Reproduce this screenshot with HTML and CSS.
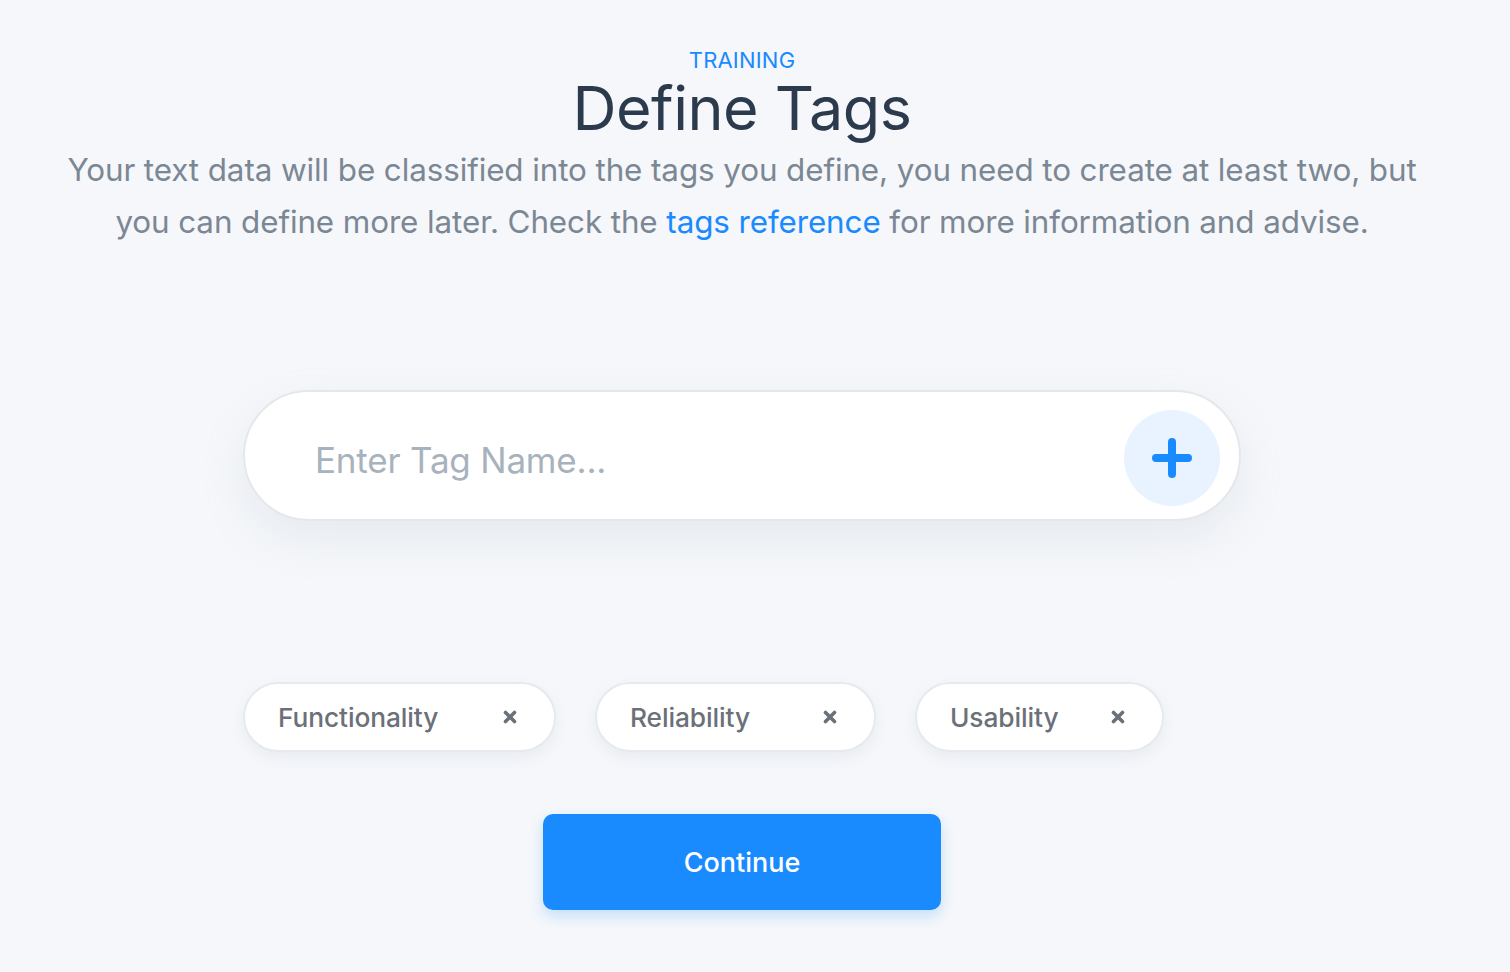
FILE: index.html
```html
<!DOCTYPE html>
<html lang="en">
<head>
<meta charset="utf-8">
<title>Define Tags</title>
<link rel="stylesheet" href="styles.css">
</head>
<body>
<main class="page">
  <header class="intro">
    <div class="eyebrow">TRAINING</div>
    <h1 class="title">Define Tags</h1>
    <p class="lead">Your text data will be classified into the tags you define, you need to create at least two, but you can define more later. Check the <a class="link" href="#">tags reference</a> for more information and advise.</p>
  </header>

  <form class="tag-form" onsubmit="return false">
    <input class="tag-input" type="text" placeholder="Enter Tag Name...">
    <button class="add-btn" type="button" aria-label="Add tag">
      <svg width="42" height="42" viewBox="0 0 42 42"><path d="M21 5V37M5 21H37" stroke="#1a8aff" stroke-width="8" stroke-linecap="round" fill="none"/></svg>
    </button>
  </form>

  <ul class="chips">
    <li class="chip chip-func"><span class="chip-label">Functionality</span><svg class="chip-x" width="14" height="14" viewBox="0 0 14 14"><path d="M2.5 2.5L11.5 11.5M11.5 2.5L2.5 11.5" stroke="#6b7079" stroke-width="3.6" stroke-linecap="round"/></svg></li>
    <li class="chip chip-rel"><span class="chip-label">Reliability</span><svg class="chip-x" width="14" height="14" viewBox="0 0 14 14"><path d="M2.5 2.5L11.5 11.5M11.5 2.5L2.5 11.5" stroke="#6b7079" stroke-width="3.6" stroke-linecap="round"/></svg></li>
    <li class="chip chip-use"><span class="chip-label">Usability</span><svg class="chip-x" width="14" height="14" viewBox="0 0 14 14"><path d="M2.5 2.5L11.5 11.5M11.5 2.5L2.5 11.5" stroke="#6b7079" stroke-width="3.6" stroke-linecap="round"/></svg></li>
  </ul>

  <div class="actions">
    <button class="continue" type="button">Continue</button>
  </div>
</main>
</body>
</html>
```

FILE: styles.css
```css
* { box-sizing: border-box; }
html, body { margin: 0; padding: 0; }
body {
  background: #f5f7fa;
  font-family: "Inter", "Noto Sans", sans-serif;
  color: #2c3e50;
  height: 972px;
  overflow: hidden;
}
.page {
  display: flex;
  flex-direction: column;
  align-items: center;
  padding: 46px 26px 0 0;
}
.intro {
  display: flex;
  flex-direction: column;
  align-items: center;
  text-align: center;
}
.eyebrow {
  color: #1a8aff;
  font-size: 22px;
  line-height: 28px;
  letter-spacing: 0.2px;
}
.title {
  margin: -2px 0 0;
  font-weight: 400;
  font-size: 61px;
  line-height: 72px;
  color: #2c3a4d;
  letter-spacing: -0.5px;
}
.lead {
  margin: 0;
  width: 1380px;
  font-size: 31.4px;
  line-height: 52px;
  color: #7b8794;
  letter-spacing: -0.1px;
}
.link { color: #1a8aff; text-decoration: none; }

.tag-form {
  margin-top: 142px;
  width: 998px;
  height: 131px;
  background: #fff;
  border: 2px solid #e4e7ec;
  border-radius: 66px;
  box-shadow: 0 18px 40px rgba(180, 190, 205, 0.22);
  display: flex;
  align-items: center;
  padding: 4px 19px 0 70px;
}
.tag-input {
  flex: 1;
  border: 0;
  outline: 0;
  background: transparent;
  font-family: inherit;
  font-size: 35px;
  color: #2c3a4d;
  letter-spacing: -0.2px;
  padding: 4px 0 0;
}
.tag-input::placeholder { color: #a8b2bc; }
.add-btn {
  width: 96px;
  height: 96px;
  border-radius: 50%;
  border: 0;
  background: #e8f3ff;
  display: flex;
  align-items: center;
  justify-content: center;
  padding: 0;
}

.chips {
  list-style: none;
  margin: 161px 0 0;
  padding: 0;
  width: 998px;
  display: flex;
  gap: 39px;
}
.chip {
  height: 70px;
  background: #fff;
  border: 2px solid #e6e9ee;
  border-radius: 35px;
  display: flex;
  align-items: center;
  justify-content: space-between;
  padding: 0 37px 0 33px;
  box-shadow: 0 6px 14px rgba(180, 190, 205, 0.18);
}
.chip-func { width: 313px; }
.chip-rel { width: 281px; }
.chip-use { width: 249px; }
.chip-label {
  font-size: 26.3px;
  font-weight: 500;
  color: #6b7079;
  letter-spacing: -0.1px;
}
.chip-x { display: block; }

.actions { margin-top: 62px; }
.continue {
  width: 398px;
  height: 96px;
  border: 0;
  border-radius: 10px;
  background: #1a8aff;
  color: #fff;
  font-family: inherit;
  font-size: 27px;
  font-weight: 500;
  box-shadow: 0 6px 14px rgba(26, 138, 255, 0.22);
}
```
